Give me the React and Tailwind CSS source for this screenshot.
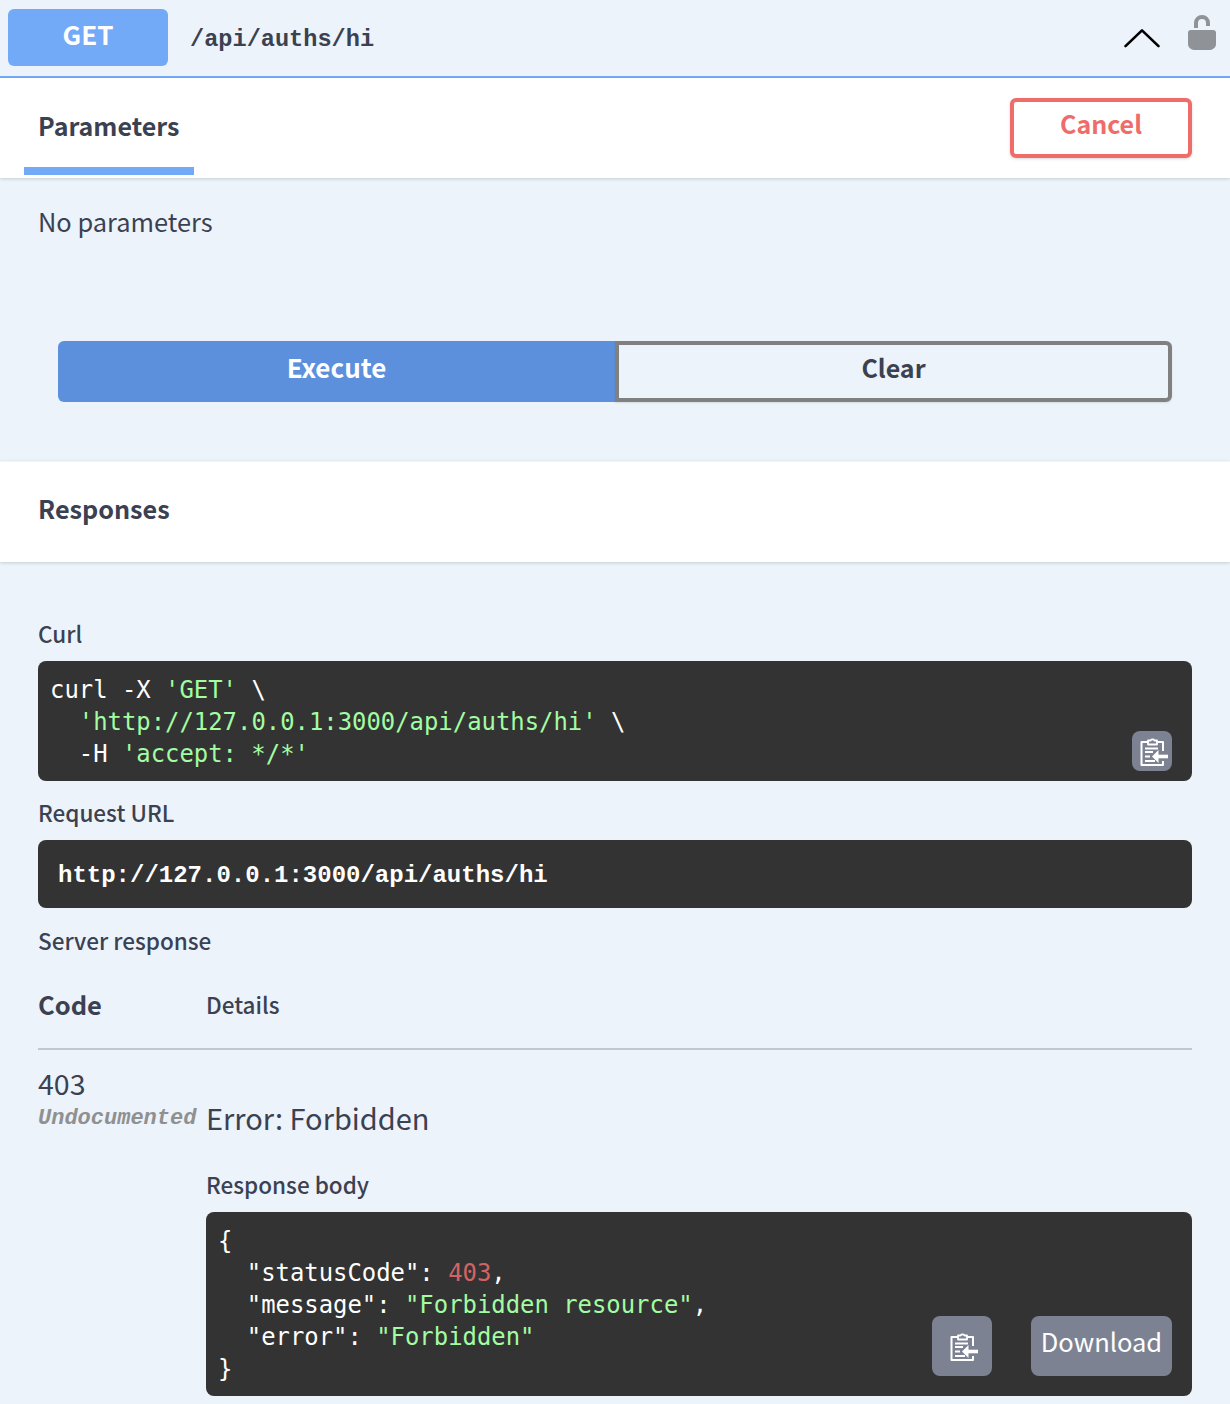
const sans = { fontFamily: '"Noto Sans CJK KR","Noto Sans",sans-serif' };

function CopyIcon({ className }) {
  return (
    <svg viewBox="0 0 28 29" className={className} fill="none" stroke="#fff">
      <path d="M8 3.5h2.5a2.4 2.4 0 0 1 4 0H17V7.5H8z" strokeWidth="1.8" strokeLinejoin="round" />
      <path d="M8 5H1.5v23H23v-4M17 5h6v9" strokeWidth="2" strokeLinejoin="round" />
      <path d="M5 11.5h13M5 15h8M5 19.5h5M5 24h10" strokeWidth="2" />
      <path d="M28 19.5H15" strokeWidth="3.6" />
      <path d="M18.5 13 12 19.5l6.5 6.5z" fill="#fff" stroke="none" />
    </svg>
  );
}

function Label({ children, className = "" }) {
  return <div className={"text-[#3b4151] text-[22.5px] font-medium leading-[32px] " + className} style={sans}>{children}</div>;
}

export default function App() {
  return (
    <div className="w-[1230px] h-[1404px] overflow-hidden bg-[#ecf3fb] text-[#3b4151]" style={sans}>
      <div className="h-[78px] border-b-2 border-[#73aaf8] flex items-start pl-2 pt-[9px] pr-[13px]">
        <div className="w-[160px] h-[57px] rounded-[6px] bg-[#73aaf8] text-white text-[26px] font-bold flex items-center justify-center pb-[8px]">GET</div>
        <div className="ml-[22px] mt-[13px] text-[23.6px] leading-[36px] font-bold" style={{ fontFamily: '"Liberation Mono",monospace' }}>/api/auths/hi</div>
        <div className="ml-auto flex items-start">
          <svg viewBox="0 0 36 20" className="w-[36px] h-[20px] mt-[20px] mr-[27px]" fill="none" stroke="#000" strokeWidth="2.6" strokeLinecap="round" strokeLinejoin="round">
            <path d="M1.5 18.5 18 2l16.5 16.5" transform="translate(0 -0.5) scale(1 0.95)" />
          </svg>
          <svg viewBox="0 0 30 37" className="w-[30px] h-[37px] mt-[5px]" fill="#8f9296">
            <path d="M9 14V9a6 6 0 0 1 12 0v3" fill="none" stroke="#8f9296" strokeWidth="4" />
            <path d="M4 16h22a3 3 0 0 1 3 3v11c0 4-4 6-7 6H8c-3 0-7-2-7-6V19a3 3 0 0 1 3-3z" />
          </svg>
        </div>
      </div>

      <div className="h-[100px] bg-white flex items-start justify-between pr-[38px] shadow-[0_1px_3px_rgba(0,0,0,0.16)] relative">
        <div className="ml-[24px] w-[170px] h-[97px] border-b-[8px] border-[#73aaf8] pl-[14px] pt-[27px] text-[25px] leading-[40px] font-semibold">Parameters</div>
        <button className="mt-[20px] w-[182px] h-[60px] rounded-[6px] border-[4px] border-[#f06c6b] bg-white text-[#f06c6b] text-[25px] font-semibold flex items-center justify-center pb-[8px] shadow-[0_1px_3px_rgba(0,0,0,0.16)]" style={sans}>Cancel</button>
      </div>

      <div className="h-[283px] px-[38px] pt-[23px]">
        <div className="text-[25.4px] leading-[40px]">No parameters</div>
        <div className="flex mt-[100px] mx-[20px] h-[61px]">
          <button className="w-1/2 rounded-l-[6px] bg-[#5c8fdc] text-white text-[26px] font-bold flex items-center justify-center pb-[10px]" style={sans}>Execute</button>
          <button className="w-1/2 rounded-r-[6px] border-[4px] border-[#808080] text-[#3b4151] text-[25px] font-semibold flex items-center justify-center pb-[8px] shadow-[0_1px_2px_rgba(0,0,0,0.1)]" style={sans}>Clear</button>
        </div>
      </div>

      <div className="h-[101px] bg-white pl-[38px] pt-[26px] text-[25.2px] leading-[40px] font-semibold shadow-[0_1px_3px_rgba(0,0,0,0.16)] border-t border-[#f3f5f8]">Responses</div>

      <div className="px-[38px] pt-[55px]">
        <Label>Curl</Label>
        <div className="relative mt-[12px] h-[120px] rounded-[8px] bg-[#333333] pl-[12px] pt-[13px] text-[23.9px] leading-[32px] text-white whitespace-pre" style={{ fontFamily: '"DejaVu Sans Mono",monospace' }}>
          <div>curl -X <span className="text-[#a2fca2]">'GET'</span> \</div>
          <div>  <span className="text-[#a2fca2]">'http://127.0.0.1:3000/api/auths/hi'</span> \</div>
          <div>  -H <span className="text-[#a2fca2]">'accept: */*'</span></div>
          <div className="absolute right-[20px] bottom-[10px] w-[40px] h-[40px] rounded-[8px] bg-[#7d8293] flex items-center justify-center">
            <CopyIcon className="w-[28px] h-[29px] ml-[4px]" />
          </div>
        </div>

        <Label className="mt-[15px]">Request URL</Label>
        <div className="mt-[12px] h-[68px] rounded-[8px] bg-[#333333] pl-[20px] pt-[19px] text-[24px] leading-[34px] text-white font-bold" style={{ fontFamily: '"Liberation Mono",monospace' }}>http://127.0.0.1:3000/api/auths/hi</div>

        <Label className="mt-[16px]">Server response</Label>

        <div className="flex items-center mt-[27px] h-[42px]">
          <div className="w-[168px] text-[25.5px] font-bold leading-[40px]">Code</div>
          <div className="text-[22.5px] font-medium leading-[32px]">Details</div>
        </div>
        <div className="mt-[23px] h-[2px] bg-[#c4c7cc]"></div>

        <div className="flex mt-[15px]">
          <div className="w-[168px] shrink-0">
            <div className="text-[28.5px] leading-[36px]">403</div>
            <div className="text-[#909090] text-[22px] leading-[28px] font-bold italic whitespace-nowrap mt-[4px]" style={{ fontFamily: '"Liberation Mono",monospace' }}>Undocumented</div>
          </div>
          <div className="flex-1 min-w-0">
            <div className="text-[29px] leading-[44px] mt-[30px]">Error: Forbidden</div>
            <Label className="mt-[29px]">Response body</Label>
            <div className="relative mt-[12px] h-[184px] rounded-[8px] bg-[#333333] pl-[12px] pt-[13px] text-[23.9px] leading-[32px] text-white whitespace-pre" style={{ fontFamily: '"DejaVu Sans Mono",monospace' }}>
              <div>{"{"}</div>
              <div>  "statusCode": <span className="text-[#d36363]">403</span>,</div>
              <div>  "message": <span className="text-[#a2fca2]">"Forbidden resource"</span>,</div>
              <div>  "error": <span className="text-[#a2fca2]">"Forbidden"</span></div>
              <div>{"}"}</div>
              <div className="absolute right-[20px] bottom-[20px] flex gap-[39px]">
                <div className="w-[60px] h-[60px] rounded-[8px] bg-[#7d8293] flex items-center justify-center">
                  <CopyIcon className="w-[28px] h-[29px] ml-[4px]" />
                </div>
                <div className="w-[141px] h-[60px] rounded-[8px] bg-[#7d8293] flex items-center justify-center text-white text-[25.5px] pb-[10px]" style={sans}>Download</div>
              </div>
            </div>
          </div>
        </div>
      </div>
    </div>
  );
}
